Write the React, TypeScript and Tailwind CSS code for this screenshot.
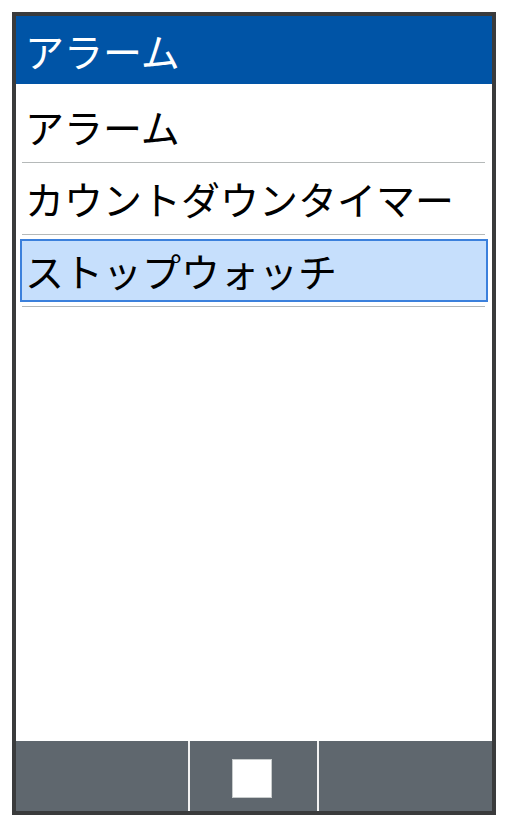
const items = ["アラーム", "カウントダウンタイマー", "ストップウォッチ"];
const selected = 2;

const jp = { fontFamily: '"Noto Sans CJK JP", "Noto Sans", sans-serif' };

export default function App() {
  return (
    <div className="min-h-[826px] w-[507px] bg-white pt-[12px] pl-[12px]" style={jp}>
      <div className="flex h-[803px] w-[484px] flex-col border-4 border-[#3a3b3c] bg-white">
        <div className="flex h-[68px] items-center bg-[#0054a6] pl-[9px] text-[39px] leading-none text-white">
          アラーム
        </div>

        <div className="flex-1 pt-[7px]">
          {items.map((label, i) => (
            <div key={label}>
              <div className="h-[71px] px-[4px] pt-[4px] pb-[4px]">
                <div
                  className={
                    i === selected
                      ? "flex h-full items-center border-2 border-[#3b80dc] bg-[#c6dffc] pl-[3px] text-[39px] leading-none text-black"
                      : "flex h-full items-center border-2 border-transparent pl-[3px] text-[39px] leading-none text-black"
                  }
                >
                  {label}
                </div>
              </div>
              <div className="ml-[6px] mr-[7px] h-px bg-[#b5b9b9]" />
            </div>
          ))}
        </div>

        <div className="flex h-[70px] bg-[#5f676e]">
          <div className="w-[172px]" />
          <div className="w-[2px] bg-[#f2f2f2]" />
          <div className="flex w-[127px] items-center justify-center pt-[5px] pr-[3px]">
            <div className="h-[39px] w-[40px] border border-[#c8cccc] bg-white" />
          </div>
          <div className="w-[2px] bg-[#f2f2f2]" />
          <div className="flex-1" />
        </div>
      </div>
    </div>
  );
}
